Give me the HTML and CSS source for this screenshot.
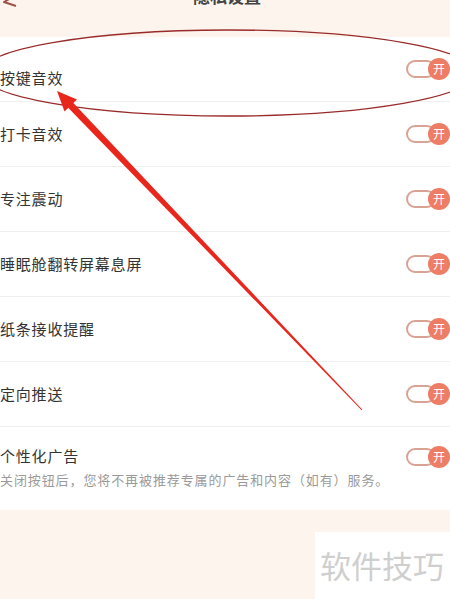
FILE: index.html
```html
<!DOCTYPE html>
<html lang="zh-CN">
    <head>
        <meta charset="UTF-8">
        <meta name="viewport" content="width=device-width, initial-scale=1.0">
        <title>隐私设置</title>
        <link rel="stylesheet" href="styles.css">
    </head>
    <body>
        <header class="top-bar">
            <svg class="back-icon" width="22" height="12" viewBox="0 0 22 12">
                <path d="M18 -6 L4 2 L16 6" fill="none" stroke="#a0524a" stroke-width="2" stroke-linejoin="round"/>
            </svg>
            <h1 class="page-title">隐私设置</h1>
        </header>

        <section class="settings-card">
            <div class="setting-row">
                <span class="setting-label first-label">按键音效</span>
                <span class="switch"><span class="switch-track"></span><span class="switch-knob">开</span></span>
            </div>
            <div class="setting-row">
                <span class="setting-label">打卡音效</span>
                <span class="switch"><span class="switch-track"></span><span class="switch-knob">开</span></span>
            </div>
            <div class="setting-row">
                <span class="setting-label">专注震动</span>
                <span class="switch"><span class="switch-track"></span><span class="switch-knob">开</span></span>
            </div>
            <div class="setting-row">
                <span class="setting-label">睡眠舱翻转屏幕息屏</span>
                <span class="switch"><span class="switch-track"></span><span class="switch-knob">开</span></span>
            </div>
            <div class="setting-row">
                <span class="setting-label">纸条接收提醒</span>
                <span class="switch"><span class="switch-track"></span><span class="switch-knob">开</span></span>
            </div>
            <div class="setting-row">
                <span class="setting-label">定向推送</span>
                <span class="switch"><span class="switch-track"></span><span class="switch-knob">开</span></span>
            </div>
            <div class="setting-row tall-row">
                <div class="label-stack">
                    <span class="setting-label">个性化广告</span>
                    <span class="setting-note">关闭按钮后，您将不再被推荐专属的广告和内容（如有）服务。</span>
                </div>
                <span class="switch"><span class="switch-track"></span><span class="switch-knob">开</span></span>
            </div>
        </section>

        <footer class="page-foot">
            <div class="watermark">软件技巧</div>
        </footer>

        <svg class="markup" width="450" height="599" viewBox="0 0 450 599">
            <ellipse cx="228" cy="73" rx="248" ry="43" fill="none" stroke="#9a2b2b" stroke-width="1.3"/>
            <polygon points="361.6,410.3 362.4,409.7 72.9,102.6 67.9,107.4" fill="#e8261c"/>
            <polygon points="57,91 77,99.5 64.5,111.5" fill="#e8261c"/>
        </svg>
    </body>
</html>
```

FILE: styles.css
```css
body {
    margin: 0;
    width: 450px;
    height: 599px;
    overflow: hidden;
    position: relative;
    background-color: #fdf5ed;
    font-family: "Noto Sans CJK SC", "Noto Sans", sans-serif;
    color: #333;
}

.top-bar {
    height: 37px;
    display: flex;
    align-items: flex-start;
    position: relative;
}

.back-icon {
    display: block;
}

.page-title {
    margin: -17px 0 0 0;
    flex: 1;
    text-align: center;
    font-size: 17px;
    font-weight: bold;
    color: #444;
    padding-right: 18px;
}

.settings-card {
    background-color: #fff;
}

.setting-row {
    height: 64px;
    border-bottom: 1px solid #efefef;
    display: flex;
    justify-content: space-between;
    align-items: center;
}

.setting-label {
    font-size: 15px;
    letter-spacing: 0.8px;
    color: #333;
    line-height: 22px;
}

.first-label {
    margin-top: 18px;
}

.tall-row {
    height: auto;
    border-bottom: none;
    align-items: flex-start;
    padding-top: 18px;
    padding-bottom: 21px;
}

.label-stack {
    display: flex;
    flex-direction: column;
}

.setting-note {
    margin-top: 4px;
    font-size: 13px;
    line-height: 18px;
    letter-spacing: 0.9px;
    color: #9a9a9a;
}

.tall-row .switch {
    margin-top: 1px;
}

.switch {
    display: flex;
    align-items: center;
}

.switch-track {
    width: 30px;
    height: 18px;
    box-sizing: border-box;
    border: 2px solid #d9a394;
    border-radius: 9px;
    background-color: #fff;
}

.switch-knob {
    width: 22px;
    height: 22px;
    margin-left: -8px;
    border-radius: 50%;
    background-color: #ee7d66;
    color: #fff;
    font-size: 12px;
    line-height: 22px;
    text-align: center;
}

.page-foot {
    display: flex;
    justify-content: flex-end;
    padding-top: 22px;
}

.watermark {
    width: 135px;
    height: 67px;
    background-color: #fff;
    color: #cfcfcf;
    font-size: 31px;
    line-height: 66px;
    padding-left: 5px;
    box-sizing: border-box;
    white-space: nowrap;
}

.markup {
    position: absolute;
    top: 0;
    left: 0;
    pointer-events: none;
}
```
